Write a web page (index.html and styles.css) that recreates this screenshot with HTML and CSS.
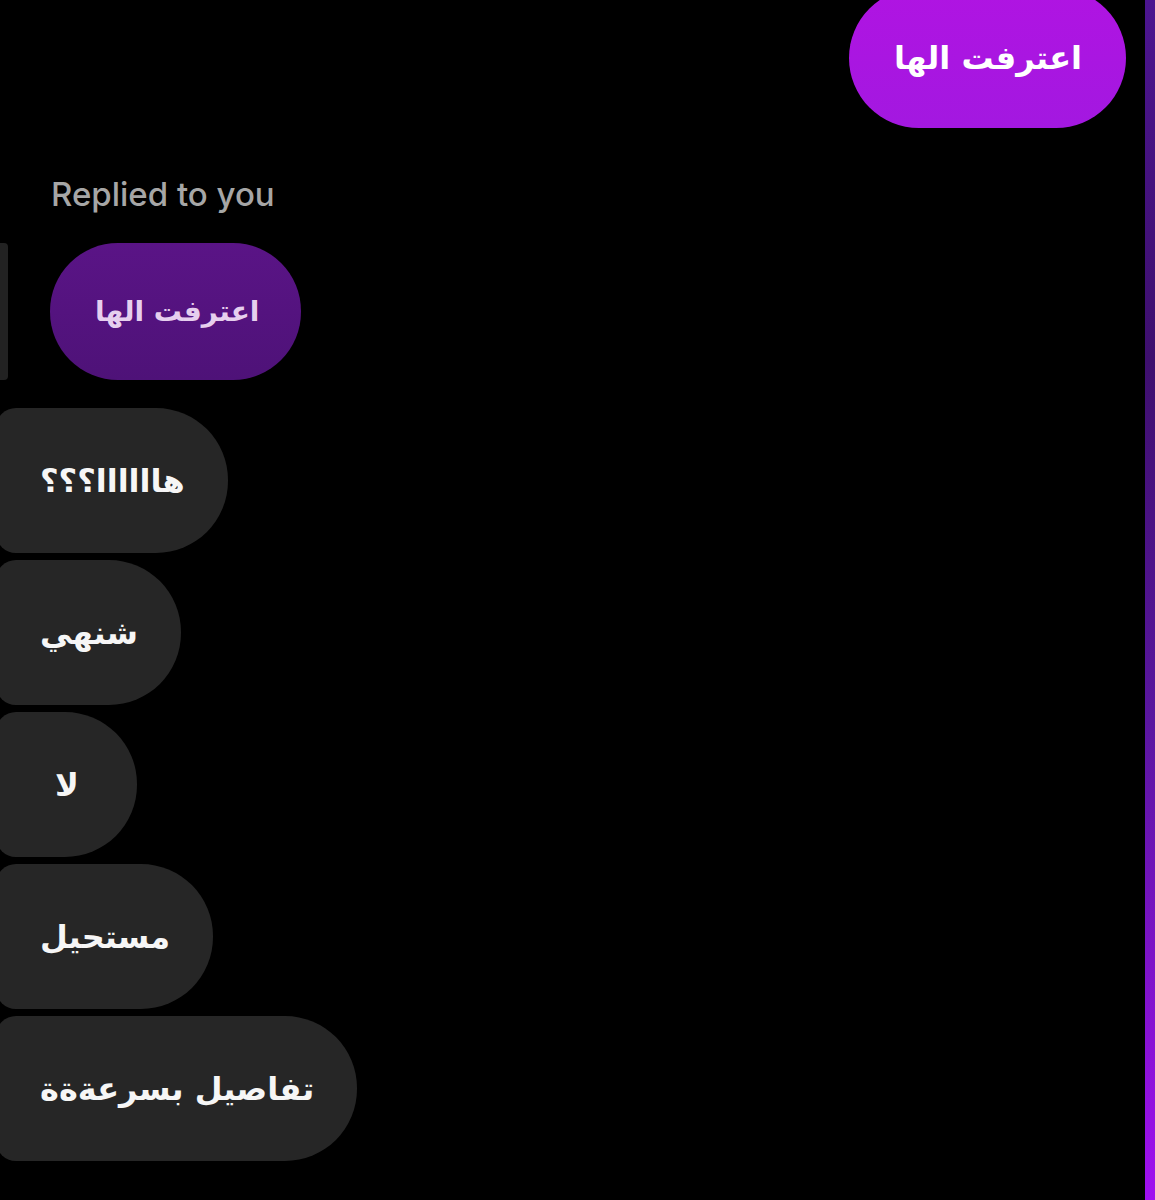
FILE: index.html
```html
<!DOCTYPE html>
<html lang="ar">
<head>
    <meta charset="UTF-8">
    <meta name="viewport" content="width=device-width, initial-scale=1.0">
    <title>Chat</title>
    <link rel="stylesheet" href="styles.css">
</head>
<body>
    <div class="screen">
        <div class="thread">
            <!-- رسالة مرسلة -->
            <div class="row-out">
                <div class="bubble sent" dir="rtl">اعترفت الها</div>
            </div>

            <!-- رد على رسالة -->
            <div class="reply">
                <div class="reply-label" dir="ltr">Replied to you</div>
                <div class="reply-quote">
                    <span class="quote-bar"></span>
                    <div class="bubble quoted" dir="rtl">اعترفت الها</div>
                </div>
            </div>

            <!-- رسائل مستلمة -->
            <div class="group">
                <div class="bubble received" dir="rtl">هاااااا؟؟؟</div>
                <div class="bubble received" dir="rtl">شنهي</div>
                <div class="bubble received short" dir="rtl">لا</div>
                <div class="bubble received" dir="rtl">مستحيل</div>
                <div class="bubble received" dir="rtl">تفاصيل بسرعةةة</div>
            </div>
        </div>
        <div class="scroll-bar"></div>
    </div>
</body>
</html>
```

FILE: styles.css
```css
html, body {
    margin: 0;
    padding: 0;
    background-color: #000;
    overflow: hidden;
}

body {
    font-family: 'DejaVu Sans', 'Noto Sans', sans-serif;
    color: #fff;
}

.screen {
    display: flex;
    height: 1200px;
}

.thread {
    flex: 1;
    display: flex;
    flex-direction: column;
    padding-right: 19px;
}

.scroll-bar {
    width: 10px;
    background: linear-gradient(to bottom, #4c1590 0%, #3e0f6e 30%, #5a16a0 60%, #a010f0 100%);
}

.bubble {
    box-sizing: border-box;
    display: flex;
    align-items: center;
    font-size: 32px;
    font-weight: bold;
    white-space: nowrap;
}

.row-out {
    display: flex;
    justify-content: flex-end;
    margin-top: -12px;
}

.sent {
    height: 140px;
    padding: 0 44px 0 45px;
    border-radius: 70px;
    background: linear-gradient(to bottom, #b014e2, #a318e0);
}

.reply {
    margin-top: 46px;
}

.reply-label {
    font-family: 'Inter', 'Roboto', sans-serif;
    font-size: 33px;
    font-weight: 500;
    color: #a6a6a6;
    padding-left: 51px;
    line-height: 40px;
}

.reply-quote {
    display: flex;
    gap: 42px;
    margin-top: 29px;
}

.quote-bar {
    width: 8px;
    height: 137px;
    background-color: #222;
    border-radius: 0 4px 4px 0;
}

.quoted {
    height: 137px;
    padding: 0 42px 0 45px;
    border-radius: 68px;
    font-size: 28px;
    background: linear-gradient(to bottom, #5a1486, #4e1278);
    color: #e6cfee;
}

.group {
    display: flex;
    flex-direction: column;
    align-items: flex-start;
    gap: 7px;
    margin-top: 28px;
    margin-left: -4px;
}

.received {
    height: 145px;
    padding: 0 43px 0 44px;
    border-radius: 20px 72px 72px 20px;
    background-color: #262626;
    color: #f6f6f6;
}

.short {
    min-width: 141px;
    justify-content: center;
}
```
